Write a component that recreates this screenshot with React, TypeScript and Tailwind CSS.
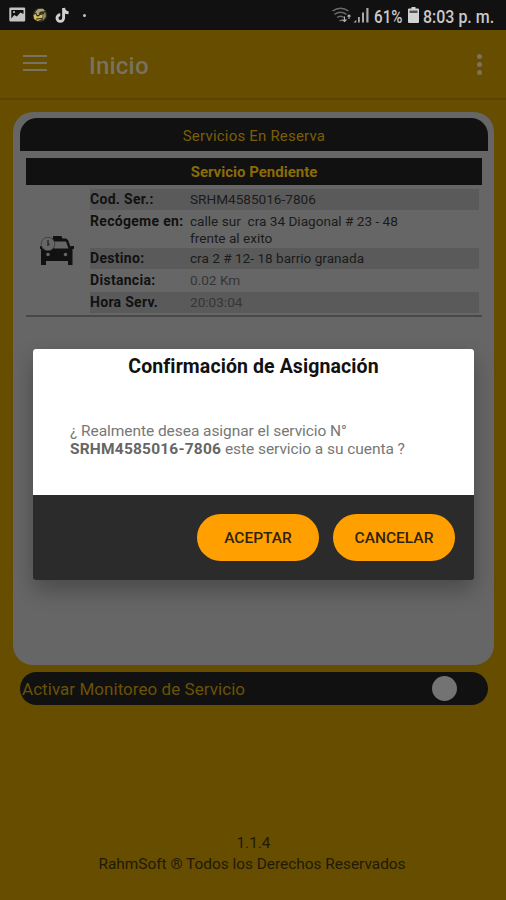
import type { ReactNode } from "react";

function StatusBar() {
  return (
    <header className="flex h-[30px] shrink-0 items-center justify-between bg-[#111111] pl-[9px] pr-[10px] text-[#c9c9c9]">
      <div className="flex items-center">
        <svg className="h-4 w-[17px]" viewBox="0 0 17 16">
          <path fillRule="evenodd" fill="#c4c4c4" d="M1.500 .5h13.500a1.200 1.200 0 0 1 1.200 1.200v11.600a1.200 1.200 0 0 1-1.200 1.200H1.500A1.200 1.200 0 0 1 .3 13.300V1.700A1.200 1.200 0 0 1 1.500 .5Zm.8 2.500v8.500l3-3.500 2.500 1.500L11.500 5.500l3 1.500V3Z" />
          <circle cx="5" cy="5" r="1.100" fill="#c4c4c4" />
        </svg>
        <svg className="ml-[6px] h-4 w-4" viewBox="0 0 16 16">
          <circle cx="8" cy="8" r="7" fill="#35321f" />
          <path d="M3 5.500 6 2l5-.3 2 2.300-4 .5-3 2Z" fill="#aaa37c" />
          <path d="M1.500 8 6 6l4.500 2.500-1 4-4 1.500-3.500-2Z" fill="#d6bc5c" />
          <path d="m9.500 6 4-.5.500 4-3 4Z" fill="#8e8654" />
          <path d="m4 7.500 2 1.500 3-2.500M4 12l6-.5" stroke="#24231b" strokeWidth="1.100" fill="none" />
          <circle cx="11" cy="6.500" r="1" fill="#24231b" />
        </svg>
        <svg className="ml-[7px] h-[17px] w-[15px]" viewBox="0 0 15 17">
          <path d="M8.600 1v10.100a3.300 3.300 0 1 1-3.300-3.300M8.600 1c.3 3 2.200 4.700 5 4.800" fill="none" stroke="#d0d0d0" strokeWidth="2.900" />
        </svg>
        <span className="ml-[13px] size-[3px] rounded-full bg-[#c4c4c4]" />
      </div>
      <div className="flex items-center">
        <svg className="h-[17px] w-[20px]" viewBox="0 0 20 17" fill="none" stroke="#6b6b6b" strokeWidth="1.500">
          <path d="M.5 4Q8.500 -1.500 16.500 4M2.500 7.300q6-4 12 0M5 10.500q3.500-2.700 7 0M7.500 13.500h3" />
          <path d="M12.500 9.500v5m-2-2 2 2 2-2M17 12V8m-1.500 1.500L17 8l1.500 1.500" stroke="#b4b4b4" strokeWidth="1.100" />
        </svg>
        <svg className="ml-[1px] h-4 w-[17px]" viewBox="0 0 17 16" fill="#a9a9a9">
          <path d="m.5 15.500 2.800-2.800v2.800ZM5 10h1.800v5.500H5ZM9 5.500h2v10H9ZM13.300 1h2.200v14.500h-2.200Z" />
        </svg>
        <span className="ml-[4px] w-[30px] origin-left scale-x-[0.800] whitespace-nowrap pt-[3px] text-[19px] font-medium leading-[30px]">61%</span>
        <svg className="ml-[4px] h-4 w-[11px]" viewBox="0 0 11 16">
          <path d="M3.500 0h4v1.500H10a1 1 0 0 1 1 1V15a1 1 0 0 1-1 1H1a1 1 0 0 1-1-1V2.500a1 1 0 0 1 1-1h2.500Z" fill="#d2d2d2" />
          <path d="M1.500 3.500h8v2.500h-8Z" fill="#555555" />
        </svg>
        <span className="ml-[4px] w-[73px] origin-left scale-x-[0.840] whitespace-nowrap pt-[3px] text-[19px] font-medium leading-[30px]">8:03 p. m.</span>
      </div>
    </header>
  );
}

function AppBar() {
  return (
    <div className="flex h-[70px] shrink-0 items-center border-b-2 border-[#5b4200] pl-[23px] pr-[24px] text-[#77735f]">
      <div className="mt-[-2px] flex w-[24px] flex-col gap-[5px]">
        <span className="h-[2px] bg-[#77735f]" />
        <span className="h-[2px] bg-[#77735f]" />
        <span className="h-[2px] bg-[#77735f]" />
      </div>
      <h1 className="ml-[42px] mt-[3px] flex-1 text-[24px] font-medium leading-8 tracking-[0.200px]">Inicio</h1>
      <div className="flex flex-col gap-[3px]">
        <span className="size-[5px] rounded-full bg-[#77735f]" />
        <span className="size-[5px] rounded-full bg-[#77735f]" />
        <span className="size-[5px] rounded-full bg-[#77735f]" />
      </div>
    </div>
  );
}

function TaxiIcon() {
  return (
    <svg className="h-[32px] w-[34px]" viewBox="0 0 34 32">
      <path d="M13 1h8.500l1 3H13Z" fill="#111" />
      <path fillRule="evenodd" fill="#111" d="M8 3.500h18l2 1.500 2.500 7 2 2v16h-4.500v-4H6v4H1V14l3-5Zm6 3v7h14.500l-2.500-7Z" />
      <path d="M0 11h3v3H0ZM30.500 11H34v3h-3.500Z" fill="#111" />
      <circle cx="8" cy="19.500" r="1.800" fill="#666" />
      <circle cx="25.500" cy="19.500" r="1.800" fill="#666" />
      <circle cx="8" cy="9" r="6.800" fill="#666" stroke="#333" strokeWidth=".7" />
      <path d="M8 5v5l1.500-1" fill="none" stroke="#222" strokeWidth="1.300" />
    </svg>
  );
}

function Row({ label, children, shaded = false, soft = false, tall = false }: { label: string; children: ReactNode; shaded?: boolean; soft?: boolean; tall?: boolean }) {
  return (
    <div className={`flex text-[14px] ${tall ? "h-[36px] pt-[2px] leading-[17px]" : "h-[21px] leading-[21px]"} ${shaded ? "bg-[#5a5a5a]" : ""}`}>
      <dt className="w-[100px] shrink-0 whitespace-nowrap font-bold tracking-[0.300px] text-[#111]">{label}</dt>
      <dd className={`whitespace-nowrap text-[13.600px] ${soft ? "text-[#353535]" : "text-[#1b1b1b]"}`}>{children}</dd>
    </div>
  );
}

function ReserveCard() {
  return (
    <section className="ml-[13px] mr-[12px] mt-[12px] h-[553px] shrink-0 rounded-[20px] bg-[#666] pl-[7px] pr-[6px] pt-[6px]">
      <h2 className="flex h-[33px] items-center justify-center rounded-t-[17px] bg-[#111] pt-[3px] text-[15px] tracking-[0.200px] text-[#7a5e06]">Servicios En Reserva</h2>
      <div className="mx-[6px] mt-[7px] border-b-2 border-[#484848] pb-[2px]">
        <h3 className="flex h-[27px] items-center justify-center bg-[#111] pt-px text-[15px] font-bold text-[#8a6b08]">Servicio Pendiente</h3>
        <div className="mt-[4px] flex">
          <div className="flex w-[64px] items-center pl-[14px]"><TaxiIcon /></div>
          <dl className="mr-[3px] flex flex-1 flex-col gap-px">
            <Row label="Cod. Ser.:" shaded>SRHM4585016-7806</Row>
            <Row label="Recógeme en:" tall>calle sur&nbsp; cra 34 Diagonal # 23 - 48<br />frente al exito</Row>
            <Row label="Destino:" shaded>cra 2 # 12- 18 barrio granada</Row>
            <Row label="Distancia:" soft>0.02 Km</Row>
            <Row label="Hora Serv." shaded soft>20:03:04</Row>
          </dl>
        </div>
      </div>
    </section>
  );
}

function ConfirmDialog() {
  return (
    <div role="dialog" className="absolute left-[33px] top-[349px] h-[231px] w-[441px] overflow-hidden rounded-[3px] bg-[#2b2b2b] shadow-[0_10px_22px_rgba(0,0,0,0.280)]">
      <div className="h-[146px] bg-white">
        <h2 className="pt-[5px] text-center text-[19.500px] font-bold leading-[26px] tracking-[0.100px] text-[#111]">Confirmación de Asignación</h2>
        <p className="ml-[37px] mt-[43px] whitespace-nowrap text-[15.500px] leading-[17.500px] text-[#777]">
          <span className="tracking-[-0.060px]">¿ Realmente desea asignar el servicio N°</span><br />
          <b className="tracking-[0.200px] text-[#666]">SRHM4585016-7806</b><span className="tracking-[-0.060px]"> este servicio a su cuenta ?</span>
        </p>
      </div>
      <div className="flex justify-end gap-[14px] pr-[19px] pt-[19px]">
        <button className="h-[47px] w-[122px] rounded-full bg-[#ffa000] pt-[3px] text-[15.500px] font-medium text-[#30230b]">ACEPTAR</button>
        <button className="h-[47px] w-[122px] rounded-full bg-[#ffa000] pt-[3px] text-[15.500px] font-medium text-[#30230b]">CANCELAR</button>
      </div>
    </div>
  );
}

export default function App() {
  return (
    <main className="relative flex h-[900px] w-[506px] flex-col overflow-hidden bg-[#664d00] font-['Roboto',sans-serif]">
      <StatusBar />
      <AppBar />
      <ReserveCard />
      <div className="ml-5 mr-[18px] mt-[7px] flex h-[33px] shrink-0 items-center justify-between rounded-full bg-[#111] pl-[2px] pr-[31px]">
        <span className="pt-[2px] text-[17px] tracking-[0.050px] text-[#6b5205]">Activar Monitoreo de Servicio</span>
        <span className="size-[25px] rounded-full bg-[#737373]" />
      </div>
      <footer className="mb-[25px] mt-auto pr-[2px] text-center text-[15.400px] leading-[21px] text-[#211a06]">
        <p className="pl-[3px]">1.1.4</p>
        <p>RahmSoft ® Todos los Derechos Reservados</p>
      </footer>
      <ConfirmDialog />
    </main>
  );
}
